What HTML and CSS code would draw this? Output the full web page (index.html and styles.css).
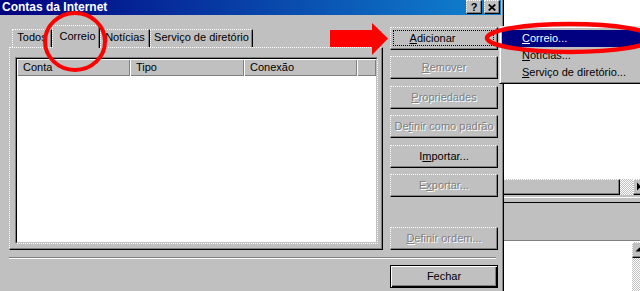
FILE: index.html
```html
<!DOCTYPE html>
<html lang="pt">
<head>
<meta charset="utf-8">
<title>Contas da Internet</title>
<link rel="stylesheet" href="styles.css">
</head>
<body>
<div class="screen">
  <div class="dialog">
    <div class="titlebar">
      <span class="title">Contas da Internet</span>
      <div class="tb-buttons">
        <span class="tb-btn">?</span>
        <span class="tb-btn">
          <svg width="8" height="7" viewBox="0 0 8 7"><path d="M0.7 0.5L7.3 6.5M7.3 0.5L0.7 6.5" stroke="#000" stroke-width="1.7"/></svg>
        </span>
      </div>
    </div>
    <div class="dlg-body">
      <div class="main">
        <div class="tabs-area">
          <div class="tabstrip">
            <div class="tab t-todos">Todos</div>
            <div class="tab active t-correio">Correio</div>
            <div class="tab t-noticias">Notícias</div>
            <div class="tab t-servico">Serviço de diretório</div>
          </div>
          <div class="panel">
            <div class="list">
              <div class="list-inner">
                <div class="list-header">
                  <div class="hcell c1">Conta</div>
                  <div class="hcell c2">Tipo</div>
                  <div class="hcell c3">Conexão</div>
                  <div class="hcell c4"></div>
                </div>
                <div class="list-body"></div>
              </div>
            </div>
          </div>
        </div>
        <div class="btncol">
          <button class="btn"><span class="focusbox"><span class="shift"><u>A</u>dicionar</span></span></button>
          <button class="btn" disabled><u>R</u>emover</button>
          <button class="btn" disabled><u>P</u>ropriedades</button>
          <button class="btn" disabled>De<u>f</u>inir como padrão</button>
          <button class="btn">I<u>m</u>portar...</button>
          <button class="btn" disabled>E<u>x</u>portar...</button>
          <button class="btn bottom" disabled><u>D</u>efinir ordem...</button>
        </div>
      </div>
      <div class="sep"></div>
      <div class="footer">
        <button class="btn default">Fechar</button>
      </div>
    </div>
  </div>
  <div class="bgwin">
    <div class="bg-top"></div>
    <div class="hscroll">
      <div class="hthumb"></div>
      <div class="checker htrack"></div>
      <div class="sbtn">
        <svg width="16" height="16" viewBox="0 0 16 16"><path d="M4 3.5L8 7.5L4 11.5Z" fill="#000"/></svg>
      </div>
    </div>
    <div class="bg-frame"><div class="bg-line"></div></div>
    <div class="bg-band"></div>
    <div class="bg-bottom">
      <div class="bg-white"></div>
      <div class="vscroll">
        <div class="sbtn up">
          <svg width="16" height="16" viewBox="0 0 16 16"><path d="M3.5 9.5L7.5 5.5L11.5 9.5Z" fill="#000"/></svg>
        </div>
        <div class="checker vtrack"></div>
      </div>
    </div>
  </div>
</div>
<div class="menu">
  <div class="mitem hl"><u>C</u>orreio...</div>
  <div class="mitem"><u>N</u>otícias...</div>
  <div class="mitem"><u>S</u>erviço de diretório...</div>
</div>
<svg class="annot" width="640" height="291" viewBox="0 0 640 291">
  <ellipse cx="75" cy="41.5" rx="30" ry="28.5" fill="none" stroke="#ff0000" stroke-width="4"/>
  <ellipse cx="570" cy="38" rx="83" ry="14" fill="none" stroke="#ff0000" stroke-width="4.5"/>
  <polygon points="330,30 372,30 372,23 388,38.5 372,55 372,47 330,47" fill="#ff0000"/>
</svg>
</body>
</html>
```
FILE: styles.css
```css
* { box-sizing: border-box; }
html, body { margin: 0; padding: 0; }
body {
  width: 640px;
  height: 291px;
  overflow: hidden;
  position: relative;
  background: #c0c0c0;
  font-family: "Liberation Sans", Arial, sans-serif;
  font-size: 11px;
  color: #000;
}
.screen { display: flex; width: 640px; height: 291px; overflow: hidden; }

/* dialog */
.dialog {
  width: 504px;
  flex: none;
  display: flex;
  flex-direction: column;
  background: #c0c0c0;
  border-right: 1px solid #000;
  box-shadow: inset -1px 0 #808080;
}
.titlebar {
  height: 15px;
  margin-right: 2px;
  background: linear-gradient(to right, #000080, #1084d0);
  display: flex;
  justify-content: space-between;
  align-items: flex-start;
}
.title {
  color: #fff;
  font-weight: bold;
  font-size: 12px;
  line-height: 14px;
  padding-left: 2px;
  white-space: nowrap;
}
.tb-buttons { display: flex; gap: 2px; padding-right: 1px; }
.tb-btn {
  width: 16px;
  height: 14px;
  background: #c0c0c0;
  border-top: 1px dotted #fff;
  border-left: 1px dotted #fff;
  border-right: 1px solid #000;
  border-bottom: 1px solid #000;
  box-shadow: inset -1px -1px #808080;
  display: flex;
  align-items: center;
  justify-content: center;
  font-weight: bold;
  font-size: 11px;
  line-height: 11px;
}

.dlg-body { padding: 10px 0 0 9px; }
.main { display: flex; width: 489px; }
.tabs-area { width: 374px; flex: none; display: flex; flex-direction: column; }

.tabstrip {
  display: flex;
  align-items: flex-end;
  height: 22px;
  padding-left: 3px;
  position: relative;
  z-index: 1;
}
.tab {
  height: 18px;
  background: #c0c0c0;
  border-top: 1px dotted #fff;
  border-left: 1px dotted #fff;
  border-right: 1px solid #000;
  box-shadow: inset -1px 0 #808080;
  padding-top: 1px;
  line-height: 13px;
  text-align: center;
  white-space: nowrap;
  flex: none;
}
.tab.active {
  height: 23px;
  margin-bottom: -1px;
  padding-top: 4px;
  padding-left: 3px;
}
.t-todos { width: 40px; }
.t-correio { width: 48px; }
.t-noticias { width: 50px; }
.t-servico { width: 103px; }

.panel {
  height: 203px;
  border-top: 1px dotted #fff;
  border-left: 1px dotted #fff;
  border-right: 1px solid #000;
  border-bottom: 1px solid #000;
  box-shadow: inset -1px -1px #808080;
  padding: 9px 4px 5px 5px;
}
.list {
  height: 100%;
  border-top: 1px solid #808080;
  border-left: 1px solid #808080;
  border-right: 1px dotted #fff;
  border-bottom: 1px dotted #fff;
}
.list-inner {
  height: 100%;
  border-top: 1px solid #000;
  border-left: 1px solid #000;
  border-right: 1px solid #c0c0c0;
  border-bottom: 1px solid #c0c0c0;
  background: #fff;
  display: flex;
  flex-direction: column;
}
.list-header { display: flex; height: 17px; flex: none; }
.hcell {
  background: #c0c0c0;
  box-shadow: inset 1px 1px #fff, inset -1px -1px #808080;
  padding: 1px 0 0 6px;
  line-height: 15px;
  white-space: nowrap;
}
.c1 { width: 113px; }
.c2 { width: 114px; }
.c3 { width: 113px; }
.c4 { flex: 1; }
.list-body { flex: 1; background: #fff; }

/* buttons */
.btncol {
  width: 108px;
  margin-left: 7px;
  margin-top: 2px;
  display: flex;
  flex-direction: column;
  gap: 6.4px;
}
.btn {
  width: 108px;
  height: 23px;
  flex: none;
  margin: 0;
  padding: 0;
  font-family: inherit;
  font-size: 11px;
  line-height: 13px;
  color: #000;
  background: #c0c0c0;
  border-top: 1px dotted #fff;
  border-left: 1px dotted #fff;
  border-right: 1px solid #000;
  border-bottom: 1px solid #000;
  border-radius: 0;
  box-shadow: inset -1px -1px #808080;
  display: flex;
  align-items: center;
  justify-content: center;
  white-space: nowrap;
}
.btn:disabled { color: #808080; text-shadow: 1px 1px 0 #fff; }
.btn.bottom { margin-top: auto; }
.focusbox {
  align-self: stretch;
  flex: 1;
  margin: 2px 3px 3px 2px;
  border: 1px dotted #000;
  display: flex;
  align-items: center;
  justify-content: center;
}
.shift { padding-right: 22px; }
.btn.default {
  border: 1px solid #000;
  box-shadow: inset 1px 1px #fff, inset -1px -1px #000, inset -2px -2px #808080;
}

.sep {
  width: 487px;
  height: 2px;
  margin-top: 7px;
  border-top: 1px solid #808080;
  border-bottom: 1px solid #fff;
}
.footer {
  width: 489px;
  margin-top: 6px;
  display: flex;
  justify-content: flex-end;
}

/* background window */
.bgwin {
  width: 136px;
  flex: none;
  display: flex;
  flex-direction: column;
  overflow: hidden;
  background: #c0c0c0;
}
.bg-top { height: 179px; background: #fff; flex: none; }
.hscroll { height: 16px; display: flex; flex: none; overflow: hidden; }
.hthumb {
  width: 116px;
  flex: none;
  background: #c0c0c0;
  border-top: 1px dotted #fff;
  border-right: 1px solid #000;
  border-bottom: 1px solid #000;
  box-shadow: inset -1px -1px #808080;
}
.checker {
  background: repeating-conic-gradient(#fff 0 25%, #c0c0c0 0 50%) 0 0 / 2px 2px;
}
.htrack { width: 13px; flex: none; }
.sbtn {
  width: 16px;
  height: 16px;
  flex: none;
  background: #c0c0c0;
  border-top: 1px dotted #fff;
  border-left: 1px dotted #fff;
  border-right: 1px solid #000;
  border-bottom: 1px solid #000;
  box-shadow: inset -1px -1px #808080;
  position: relative;
}
.sbtn svg { position: absolute; left: -1px; top: -1px; }
.bg-frame {
  height: 8px;
  flex: none;
  padding-top: 2px;
  border-bottom: 1px solid #000;
}
.bg-line { height: 1px; background: #fff; }
.bg-band { height: 38px; flex: none; border-bottom: 1px solid #808080; }
.bg-bottom { flex: 1; display: flex; overflow: hidden; background: #fff; }
.bg-white { width: 128px; flex: none; }
.vscroll { width: 16px; flex: none; display: flex; flex-direction: column; padding-top: 1px; }
.vtrack { flex: 1; }

/* popup menu */
.menu {
  position: absolute;
  left: 499px;
  top: 26px;
  width: 150px;
  height: 58px;
  background: #c0c0c0;
  border-top: 1px solid #dfdfdf;
  border-left: 1px solid #dfdfdf;
  border-bottom: 1px solid #000;
  box-shadow: inset 1px 1px #fff, inset 0 -1px #808080;
  padding: 3px 0 2px 2px;
  z-index: 5;
}
.mitem {
  height: 17px;
  line-height: 17px;
  padding-left: 20px;
  white-space: nowrap;
}
.mitem.hl { background: #000080; color: #fff; }

.annot {
  position: absolute;
  left: 0;
  top: 0;
  pointer-events: none;
  z-index: 10;
}
```
